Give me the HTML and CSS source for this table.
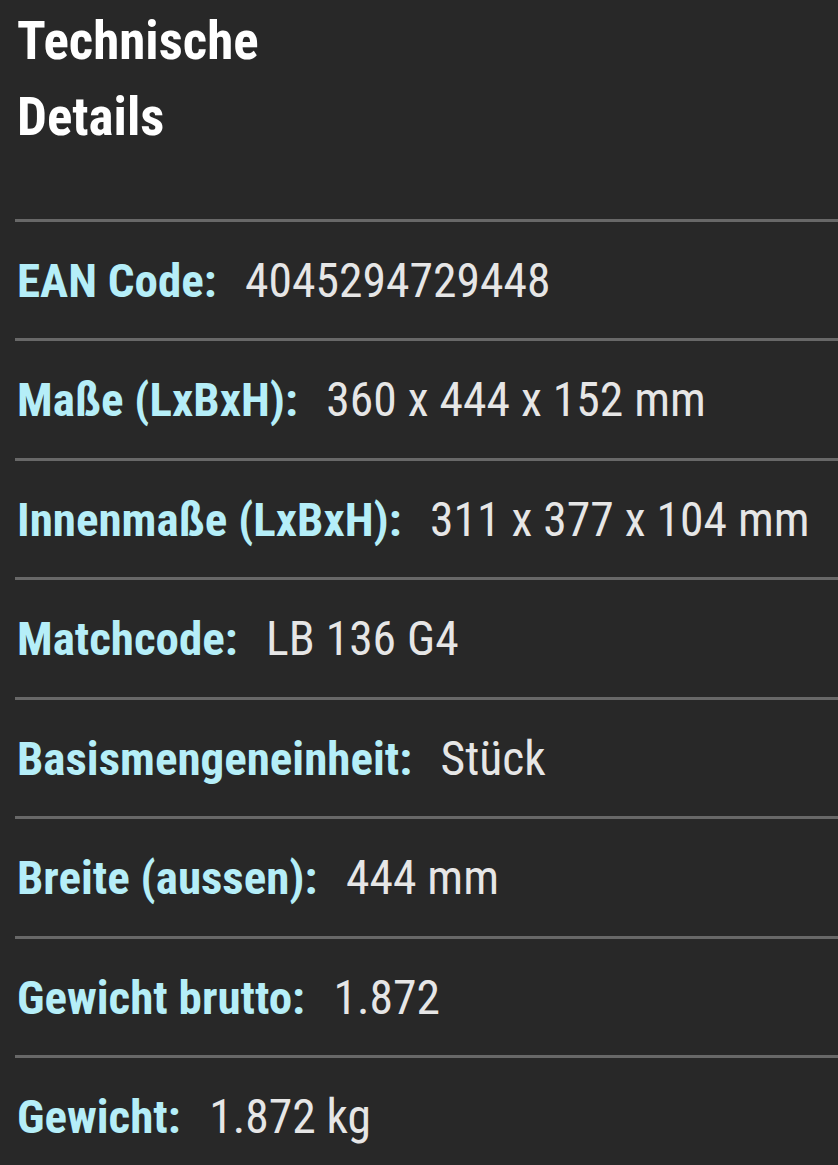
FILE: index.html
```html
<!DOCTYPE html>
<html lang="de">
<head>
    <meta charset="UTF-8">
    <meta name="viewport" content="width=device-width, initial-scale=1.0">
    <title>Technische Details</title>
    <link rel="stylesheet" href="styles.css">
</head>
<body>
    <div class="details">
        <h1 class="details-title">Technische Details</h1>

        <ul class="spec-list">
            <li class="spec-row"><span class="spec-label">EAN Code:</span> <span class="spec-value">4045294729448</span></li>
            <li class="spec-row"><span class="spec-label">Maße (LxBxH):</span> <span class="spec-value">360 x 444 x 152 mm</span></li>
            <li class="spec-row"><span class="spec-label">Innenmaße (LxBxH):</span> <span class="spec-value">311 x 377 x 104 mm</span></li>
            <li class="spec-row"><span class="spec-label">Matchcode:</span> <span class="spec-value">LB 136 G4</span></li>
            <li class="spec-row"><span class="spec-label">Basismengeneinheit:</span> <span class="spec-value">Stück</span></li>
            <li class="spec-row"><span class="spec-label">Breite (aussen):</span> <span class="spec-value">444 mm</span></li>
            <li class="spec-row"><span class="spec-label">Gewicht brutto:</span> <span class="spec-value">1.872</span></li>
            <li class="spec-row"><span class="spec-label">Gewicht:</span> <span class="spec-value">1.872 kg</span></li>
        </ul>
    </div>
</body>
</html>
```

FILE: styles.css
```css
/* dark product detail block */
body {
    background-color: #282828;
    margin: 0;
    padding: 0;
    font-family: "Roboto Condensed", Roboto, "Liberation Sans", sans-serif;
    font-stretch: condensed;
    color: #e6e6e6;
    overflow: hidden;
}

.details {
    padding: 0 0 0 15px;
}

.details-title {
    margin: 0;
    padding: 3px 0 0 2px;
    max-width: 300px;
    font-size: 53px;
    font-weight: bold;
    line-height: 76px;
    color: #ffffff;
    height: 219px;
    box-sizing: border-box;
}

.spec-list {
    list-style: none;
    margin: 0;
    padding: 0;
}

.spec-row {
    display: flex;
    align-items: baseline;
    box-sizing: border-box;
    height: 119.45px;
    border-top: 3px solid #686868;
    padding: 31px 0 0 2px;
    font-size: 47px;
    line-height: 55px;
    white-space: nowrap;
}

.spec-label {
    color: #b5eef8;
    font-weight: bold;
    margin-right: 28.5px;
}

.spec-value {
    color: #e6e6e6;
    font-size: 47.6px;
}
```
